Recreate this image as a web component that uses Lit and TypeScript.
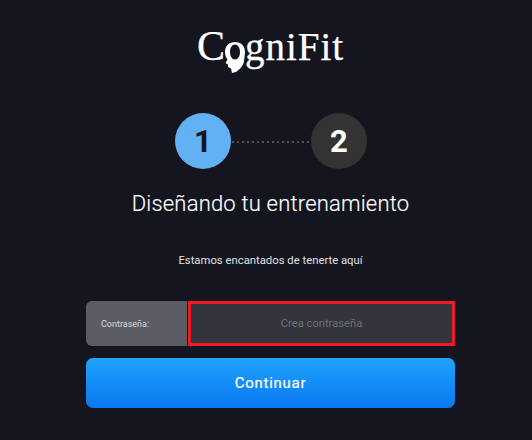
import { LitElement, html, css } from 'lit';
import { customElement } from 'lit/decorators.js';

@customElement('app-root')
export class AppRoot extends LitElement {
  static override styles = css`
    :host {
      display: block;
      width: 532px;
      height: 440px;
      overflow: hidden;
      background: #14151f;
      font-family: Roboto, 'Liberation Sans', sans-serif;
      color: #fff;
    }

    .page {
      width: 369px;
      margin-left: 86px;
      padding-top: 24px;
      display: flex;
      flex-direction: column;
      align-items: center;
    }

    .logo {
      display: flex;
      align-items: baseline;
      height: 50px;
      font-family: 'Liberation Serif', serif;
      font-size: 39px;
      line-height: 44px;
      letter-spacing: 1px;
      color: #fff;
      -webkit-text-stroke: 0.25px #fff;
    }

    .logo .initial {
      font-size: 42px;
      letter-spacing: 0;
    }

    .logo svg {
      width: 22px;
      height: 34px;
      align-self: flex-start;
      margin: 16px -1px 0 -1px;
      flex: none;
    }

    .steps {
      display: flex;
      align-items: center;
      margin-top: 39px;
      padding-left: 1px;
    }

    .step {
      width: 56px;
      height: 56px;
      border-radius: 50%;
      display: flex;
      align-items: center;
      justify-content: center;
      font-size: 31px;
      font-weight: 700;
    }

    .step.active {
      background: #62b1f3;
      color: #14151f;
    }

    .step.next {
      background: #333333;
      color: #fff;
    }

    .dots {
      width: 80px;
      height: 2px;
      margin-top: 2px;
      background: repeating-linear-gradient(90deg, #50515b 0 2px, transparent 2px 5px);
      background-position: 1px 0;
    }

    h1 {
      margin: 20px 0 0;
      font-size: 22px;
      font-weight: 300;
      line-height: 30px;
      letter-spacing: 0.2px;
      -webkit-text-stroke: 0.15px #fff;
    }

    .welcome {
      margin: 34px 0 0;
      font-size: 11.3px;
      line-height: 16px;
      color: #e0e0e2;
    }

    .field {
      align-self: stretch;
      display: flex;
      height: 45px;
      margin-top: 32px;
    }

    .field label {
      width: 101px;
      flex: none;
      box-sizing: border-box;
      padding-left: 15px;
      display: flex;
      align-items: center;
      background: #5c5c64;
      border-radius: 6px 0 0 6px;
      font-size: 9px;
      color: #d8d8dc;
    }

    .field .input {
      flex: 1;
      margin-left: 1px;
      box-sizing: border-box;
      border: 3px solid #ed1c24;
      background: #33343c;
      display: flex;
      align-items: center;
      justify-content: center;
      font-size: 11.2px;
      color: #6f7076;
    }

    button {
      align-self: stretch;
      height: 50px;
      margin-top: 12px;
      border: none;
      border-radius: 7px;
      background: linear-gradient(180deg, #1ea4fd 0%, #0a78f0 100%);
      color: #fff;
      font-family: inherit;
      font-size: 15px;
      font-weight: 400;
      letter-spacing: 0.75px;
      -webkit-text-stroke: 0.2px #fff;
    }
  `;

  override render() {
    return html`
      <div class="page">
        <div class="logo">
          <span class="initial">C</span>
          <svg viewBox="0 0 22 34" aria-hidden="true">
            <path
              fill="#fff"
              fill-rule="evenodd"
              d="M11 2 C5 2 1 6 1 12 C1 15 2 17.5 3.5 19.5 L1.5 23 L4 24.5 L4 27 L7 28.5 L8 33 L12 32 C15 30 18 27 19.5 23.5 C20 21 20.5 18 21 12 C21 6 17 2 11 2 Z M11 4.5 C14 4.5 16 8 16 12 C16 16 14 19.5 11 19.5 C8 19.5 6 16 6 12 C6 8 8 4.5 11 4.5 Z"
            ></path>
          </svg>
          <span>gniFit</span>
        </div>
        <div class="steps">
          <div class="step active">1</div>
          <div class="dots"></div>
          <div class="step next">2</div>
        </div>
        <h1>Diseñando tu entrenamiento</h1>
        <p class="welcome">Estamos encantados de tenerte aquí</p>
        <div class="field">
          <label>Contraseña:</label>
          <div class="input">Crea contraseña</div>
        </div>
        <button>Continuar</button>
      </div>
    `;
  }
}
